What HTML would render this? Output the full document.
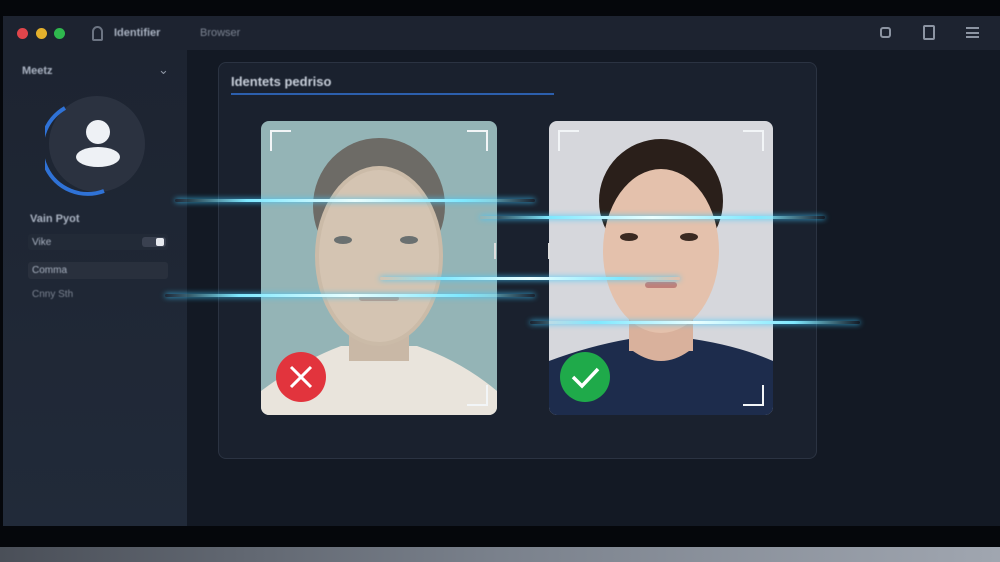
<!DOCTYPE html><html><head><style>
body{margin:0;width:1000px;height:562px;overflow:hidden;background:#05070b;font-family:"Liberation Sans",sans-serif;position:relative}
.a{position:absolute}
.t{color:#aab3c2;font-size:11px;font-weight:bold;filter:blur(.6px)}
.line{position:absolute;height:3px;border-radius:2px;background:linear-gradient(90deg,rgba(80,220,255,0),#7ee8ff 20%,#eaffff 50%,#7ee8ff 80%,rgba(80,220,255,0));box-shadow:0 0 6px #3cc8ff}
</style></head><body>
<div class="a" style="left:3px;top:16px;width:997px;height:510px;background:#131924"></div>
<div class="a" style="left:3px;top:16px;width:997px;height:34px;background:#1d2330"></div>
<div class="a" style="left:3px;top:50px;width:184px;height:476px;background:linear-gradient(#1d2431,#212a39)"></div>
<div class="a" style="left:0;top:547px;width:1000px;height:15px;background:linear-gradient(90deg,#4a4f58,#7a818c 50%,#a0a6b0)"></div>
<div class="a" style="left:17px;top:28px;width:11px;height:11px;border-radius:50%;background:#e0454b"></div>
<div class="a" style="left:36px;top:28px;width:11px;height:11px;border-radius:50%;background:#e3b02c"></div>
<div class="a" style="left:54px;top:28px;width:11px;height:11px;border-radius:50%;background:#2fb84e"></div>
<div class="a" style="left:92px;top:26px;width:11px;height:15px;border:2px solid #6c7482;border-radius:6px 6px 2px 2px;box-sizing:border-box"></div>
<div class="a t" style="left:114px;top:27px">Identifier</div>
<div class="a t" style="left:200px;top:27px;color:#7d8593;font-weight:normal">Browser</div>
<div class="a" style="left:880px;top:27px;width:11px;height:11px;border:2px solid #8c94a2;border-radius:3px;box-sizing:border-box"></div>
<div class="a" style="left:923px;top:25px;width:12px;height:15px;border:2px solid #8c94a2;border-radius:2px;box-sizing:border-box"></div>
<div class="a" style="left:966px;top:27px;width:13px;height:11px;border-top:2px solid #8c94a2;border-bottom:2px solid #8c94a2;box-sizing:border-box"><div style="margin-top:2.5px;height:2px;background:#8c94a2"></div></div>
<div class="a t" style="left:22px;top:65px">Meetz</div>
<div class="a" style="left:158px;top:62px;color:#8c94a2;font-size:13px">⌄</div>
<svg class="a" style="left:45px;top:92px" width="105" height="105"><circle cx="52" cy="52" r="48" fill="#2b3240"/><path d="M20 16 A46 46 0 0 0 59 99" fill="none" stroke="#2f72d6" stroke-width="4"/><circle cx="53" cy="40" r="12" fill="#eef1f5"/><ellipse cx="53" cy="65" rx="22" ry="10" fill="#eef1f5"/></svg>
<div class="a t" style="left:30px;top:213px">Vain Pyot</div>
<div class="a" style="left:28px;top:234px;width:140px;height:16px;background:#222a37;border-radius:3px"></div>
<div class="a t" style="left:32px;top:237px;font-weight:normal;font-size:10px">Vike</div>
<div class="a" style="left:142px;top:237px;width:24px;height:10px;background:#3a4150;border-radius:3px"></div><div class="a" style="left:156px;top:238px;width:8px;height:8px;background:#e6e9ee;border-radius:2px"></div>
<div class="a" style="left:28px;top:262px;width:140px;height:17px;background:#29303d;border-radius:3px"></div>
<div class="a t" style="left:32px;top:265px;font-weight:normal;font-size:10px">Comma</div>
<div class="a t" style="left:32px;top:289px;font-weight:normal;font-size:10px;color:#7d8593">Cnny Sth</div>
<div class="a" style="left:218px;top:62px;width:599px;height:397px;background:#1a212e;border:1px solid #2b3342;border-radius:8px;box-sizing:border-box"></div>
<div class="a t" style="left:231px;top:74px;font-size:13px;color:#c9d0db">Identets pedriso</div>
<div class="a" style="left:231px;top:93px;width:323px;height:2px;background:#2c5fad"></div>
<svg class="a" style="left:261px;top:121px" width="236" height="294"><defs><clipPath id="c1"><rect width="236" height="294" rx="8"/></clipPath></defs><g clip-path="url(#c1)"><rect width="236" height="294" fill="#94b4b6"/><path d="M0 270 Q40 240 80 225 L156 225 Q200 240 236 270 V294 H0Z" fill="#e9e4dc"/><rect x="88" y="190" width="60" height="50" fill="#c9b8a6"/><ellipse cx="118" cy="85" rx="66" ry="68" fill="#6d6b66"/><ellipse cx="118" cy="135" rx="64" ry="90" fill="#cbbba8"/><ellipse cx="118" cy="135" rx="60" ry="86" fill="#d4c4b2"/><ellipse cx="82" cy="119" rx="9" ry="4" fill="#6a7070"/><ellipse cx="148" cy="119" rx="9" ry="4" fill="#6a7070"/><rect x="98" y="175" width="40" height="5" rx="3" fill="#b89a8a"/></g><g fill="none" stroke="#f2f5f7" stroke-width="2"><path d="M10 30V10H30M206 10H226V30M226 264V284H206"/></g><circle cx="40" cy="256" r="25" fill="#e2343d"/><path d="M30 246L50 266M50 246L30 266" stroke="#fff" stroke-width="3"/></svg>
<svg class="a" style="left:549px;top:121px" width="224" height="294"><defs><clipPath id="c2"><rect width="224" height="294" rx="8"/></clipPath></defs><g clip-path="url(#c2)"><rect width="224" height="294" fill="#d6d7dc"/><path d="M0 240 Q40 225 80 218 L144 218 Q190 225 224 240 V294 H0Z" fill="#1d2c4c"/><rect x="80" y="180" width="64" height="50" fill="#d9b19c"/><path d="M84 230 Q112 250 140 230 L144 218 H80Z" fill="#d9b19c"/><ellipse cx="112" cy="80" rx="62" ry="62" fill="#2a1f1a"/><ellipse cx="112" cy="130" rx="58" ry="82" fill="#e4c1ac"/><ellipse cx="80" cy="116" rx="9" ry="4" fill="#3a2a22"/><ellipse cx="140" cy="116" rx="9" ry="4" fill="#3a2a22"/><rect x="96" y="161" width="32" height="6" rx="3" fill="#c0807a"/></g><g fill="none" stroke="#f2f5f7" stroke-width="2"><path d="M10 30V10H30M194 10H214V30M214 264V284H194"/></g><circle cx="36" cy="256" r="25" fill="#1faa4a"/><path d="M24 256L33 265L49 248" fill="none" stroke="#fff" stroke-width="3.5"/></svg>
<div class="a" style="left:494px;top:243px;width:2px;height:16px;background:#ddd"></div>
<div class="a" style="left:548px;top:243px;width:2px;height:16px;background:#ddd"></div>
<div class="line" style="left:175px;top:199px;width:360px"></div>
<div class="line" style="left:480px;top:216px;width:345px"></div>
<div class="line" style="left:380px;top:277px;width:300px"></div>
<div class="line" style="left:165px;top:294px;width:370px"></div>
<div class="line" style="left:530px;top:321px;width:330px"></div>
</body></html>
